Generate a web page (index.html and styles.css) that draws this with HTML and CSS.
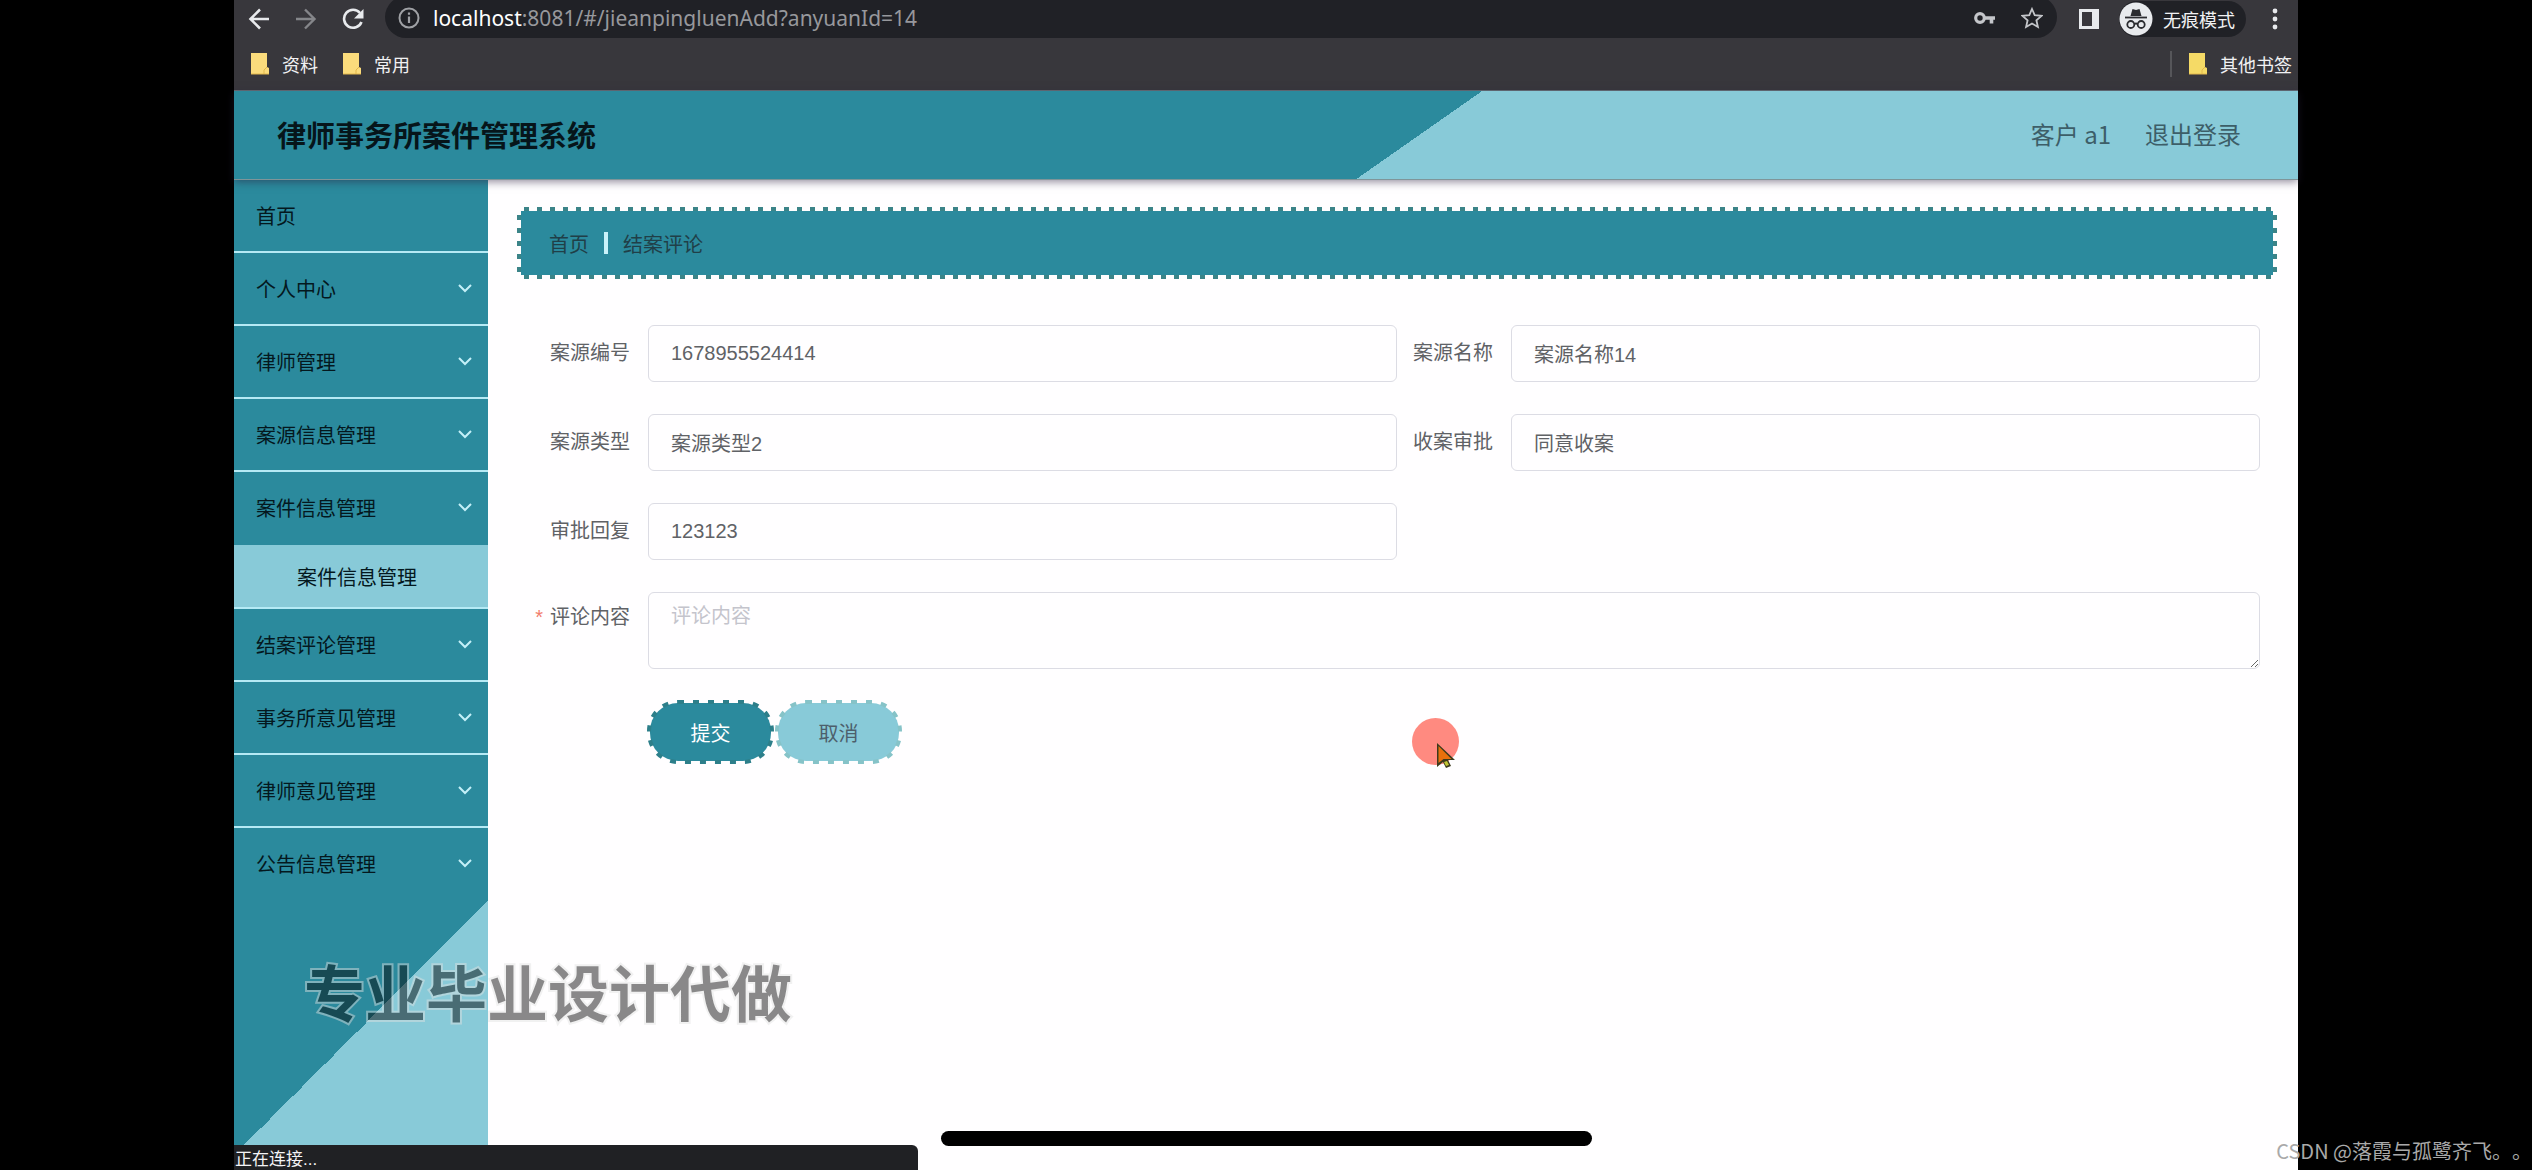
FILE: index.html
```html
<!DOCTYPE html>
<html lang="zh-CN">
<head>
<meta charset="utf-8">
<title>律师事务所案件管理系统</title>
<link rel="stylesheet" href="styles.css">
</head>
<body>
<div class="screen">
  <div class="browser">
    <div class="toolbar">
      <div class="nav-buttons">
        <button class="icon-button" type="button" aria-label="后退"><svg width="22" height="22" viewBox="0 0 22 22"><path d="M21 11H3M12 1.500L2.500 11l9.500 9.500" fill="none" stroke="#e8eaed" stroke-width="2.600"/></svg></button>
        <button class="icon-button" type="button" aria-label="前进"><svg width="22" height="22" viewBox="0 0 22 22"><path d="M1 11h18M10 1.500l9.500 9.500-9.500 9.500" fill="none" stroke="#85868a" stroke-width="2.400"/></svg></button>
        <button class="icon-button" type="button" aria-label="重新加载"><svg width="22" height="22" viewBox="0 0 22 22"><path d="M19.500 14A9 9 0 1 1 18 5" fill="none" stroke="#e8eaed" stroke-width="2.600"/><path d="M21.500 1v9.500h-9.500z" fill="#e8eaed"/></svg></button>
      </div>
      <div class="address">
        <svg width="22" height="22" viewBox="0 0 22 22"><circle cx="11" cy="11" r="9.500" fill="none" stroke="#9fa1a5" stroke-width="2"/><path d="M11 9.500v6.500M11 5.500v2.300" stroke="#9fa1a5" stroke-width="2.200"/></svg>
        <span class="url"><span class="url-host">localhost</span>:8081/#/jieanpingluenAdd?anyuanId=14</span>
        <svg class="key" width="22" height="16" viewBox="0 0 22 16"><circle cx="6" cy="8" r="4.300" fill="none" stroke="#c4c6ca" stroke-width="3.200"/><path d="M10 8h11M17.500 8v5.500" stroke="#c4c6ca" stroke-width="3.600"/></svg>
        <svg width="22" height="22" viewBox="0 0 22 22"><path d="M11 2l2.700 6.200 6.800.6-5.100 4.500 1.500 6.700-5.900-3.500L5.100 20l1.500-6.700L1.500 8.800l6.800-.6z" fill="none" stroke="#c4c6ca" stroke-width="1.800"/></svg>
      </div>
      <svg class="panel" width="20" height="20" viewBox="0 0 20 20"><path d="M0 0h20v20H0zM3 3v14h10V3z" fill="#e8eaed" fill-rule="evenodd"/></svg>
      <div class="incognito">
        <svg width="34" height="34" viewBox="0 0 34 34"><circle cx="17" cy="17" r="16.500" fill="#e8eaed"/><path d="M11.500 14l2-7 3.500 1 3.500-1 2 7z" fill="#2b2c30"/><path d="M6 15.500h22" stroke="#2b2c30" stroke-width="1.800"/><g fill="none" stroke="#2b2c30" stroke-width="1.800"><circle cx="11.800" cy="22.500" r="3.500"/><circle cx="22.200" cy="22.500" r="3.500"/><path d="M15.300 22q1.700-1 3.400 0"/></g></svg>
        <span>无痕模式</span>
      </div>
      <svg width="6" height="22" viewBox="0 0 6 22"><g fill="#e8eaed"><circle cx="3" cy="3" r="2.400"/><circle cx="3" cy="11" r="2.400"/><circle cx="3" cy="19" r="2.400"/></g></svg>
    </div>
    <div class="bookmarks">
      <a class="bookmark" href="#"><svg width="18" height="22" viewBox="0 0 18 22"><path d="M0 0h16v14l2 1v6H0z" fill="#fbdc7c"/><path d="M0 21h18M13 21v-4l3-3" stroke="#e2b84c" fill="none"/></svg>资料</a>
      <a class="bookmark" href="#"><svg width="18" height="22" viewBox="0 0 18 22"><path d="M0 0h16v14l2 1v6H0z" fill="#fbdc7c"/><path d="M0 21h18M13 21v-4l3-3" stroke="#e2b84c" fill="none"/></svg>常用</a>
      <a class="bookmark other" href="#"><svg width="18" height="22" viewBox="0 0 18 22"><path d="M0 0h16v14l2 1v6H0z" fill="#f5da66"/><path d="M0 21h18M13 21v-4l3-3" stroke="#e2b84c" fill="none"/></svg>其他书签</a>
    </div>
  </div>

  <header class="app-header">
    <h1 class="app-title">律师事务所案件管理系统</h1>
    <div class="account">
      <span>客户 a1</span>
      <a href="#">退出登录</a>
    </div>
  </header>

  <div class="app-body">
    <aside class="sidebar">
      <nav>
        <ul class="menu">
          <li><a class="menu-item" href="#">首页</a></li>
          <li><a class="menu-item" href="#">个人中心<svg class="chevron" viewBox="0 0 14 9"><path d="M1 1l6 6 6-6"/></svg></a></li>
          <li><a class="menu-item" href="#">律师管理<svg class="chevron" viewBox="0 0 14 9"><path d="M1 1l6 6 6-6"/></svg></a></li>
          <li><a class="menu-item" href="#">案源信息管理<svg class="chevron" viewBox="0 0 14 9"><path d="M1 1l6 6 6-6"/></svg></a></li>
          <li><a class="menu-item open" href="#">案件信息管理<svg class="chevron" viewBox="0 0 14 9"><path d="M1 1l6 6 6-6"/></svg></a>
            <a class="submenu-item" href="#">案件信息管理</a></li>
          <li><a class="menu-item" href="#">结案评论管理<svg class="chevron" viewBox="0 0 14 9"><path d="M1 1l6 6 6-6"/></svg></a></li>
          <li><a class="menu-item" href="#">事务所意见管理<svg class="chevron" viewBox="0 0 14 9"><path d="M1 1l6 6 6-6"/></svg></a></li>
          <li><a class="menu-item" href="#">律师意见管理<svg class="chevron" viewBox="0 0 14 9"><path d="M1 1l6 6 6-6"/></svg></a></li>
          <li><a class="menu-item last" href="#">公告信息管理<svg class="chevron" viewBox="0 0 14 9"><path d="M1 1l6 6 6-6"/></svg></a></li>
        </ul>
      </nav>
      <div class="sidebar-foot"></div>
    </aside>

    <main class="content">
      <div class="breadcrumb">
        <a href="#">首页</a>
        <span class="separator"></span>
        <span class="current">结案评论</span>
      </div>
      <form class="form">
        <div class="field">
          <label for="no">案源编号</label>
          <input id="no" type="text" value="1678955524414" readonly>
        </div>
        <div class="field">
          <label for="name">案源名称</label>
          <input id="name" type="text" value="案源名称14" readonly>
        </div>
        <div class="field">
          <label for="type">案源类型</label>
          <input id="type" type="text" value="案源类型2" readonly>
        </div>
        <div class="field">
          <label for="approval">收案审批</label>
          <input id="approval" type="text" value="同意收案" readonly>
        </div>
        <div class="field first-column">
          <label for="reply">审批回复</label>
          <input id="reply" type="text" value="123123" readonly>
        </div>
        <div class="field wide">
          <label for="comment"><span class="required">*</span>评论内容</label>
          <textarea id="comment" placeholder="评论内容"></textarea>
        </div>
        <div class="actions wide">
          <button class="pill submit" type="submit"><svg class="pill-shape" aria-hidden="true"><rect class="pill-fill"/><rect class="pill-edge"/></svg><span>提交</span></button>
          <button class="pill cancel" type="button"><svg class="pill-shape" aria-hidden="true"><rect class="pill-fill"/><rect class="pill-edge"/></svg><span>取消</span></button>
        </div>
      </form>
    </main>
  </div>

  <div class="watermark">专业毕业设计代做</div>
  <div class="status">正在连接...</div>
  <svg class="pointer" width="48" height="52" viewBox="0 0 48 52"><circle cx="23.500" cy="23.500" r="23.500" fill="#ff8a80"/><path d="M25 25v24l6-5 3 6 5-2-3-6h7z" fill="#3c3a1c"/><path d="M26.500 28v17l5-4h8z" fill="#e8700c"/><path d="M32 44l2 4 3-1-2-4z" fill="#c3c736"/></svg>
</div>
<div class="home-indicator"></div>
<div class="credit">CSDN @落霞与孤鹭齐飞。。</div>
</body>
</html>
```
FILE: styles.css
```css
:root {
  --teal: #2b8a9d;
  --light: #88cad8;
  --line: #b5eaf5;
}

* {
  box-sizing: border-box;
}

body {
  margin: 0;
  min-height: 100vh;
  padding: 0 234px;
  display: flex;
  background: #000;
  font-family: "Liberation Sans", "Noto Sans CJK SC", sans-serif;
  font-size: 20px;
  position: relative;
}

a {
  color: inherit;
  text-decoration: none;
}

svg {
  display: block;
  flex: none;
}

.screen {
  flex: 1;
  display: flex;
  flex-direction: column;
  position: relative;
  background: #fffeff;
}

/* Browser chrome */

.browser {
  background: #38373c;
  border-bottom: 1px solid #67717a;
  color: #f1f1f3;
  font-size: 18px;
}

.toolbar {
  height: 38px;
  display: flex;
  align-items: center;
  padding-right: 20px;
}

.nav-buttons {
  display: flex;
  gap: 25px;
  padding: 0 21px 0 14px;
}

.icon-button {
  border: 0;
  padding: 0;
  background: none;
}

.address {
  flex: 1;
  height: 42px;
  margin-top: -4px;
  padding: 2px 14px 0 13px;
  display: flex;
  align-items: center;
  border-radius: 21px;
  background: #202126;
}

.url {
  flex: 1;
  padding-left: 13px;
  color: #97989c;
  font-family: "Noto Sans", sans-serif;
  font-size: 21px;
  line-height: 28px;
}

.url-host {
  color: #fff;
}

.key {
  margin-right: 25px;
}

.panel {
  margin: 0 20px 0 22px;
}

.incognito {
  height: 36px;
  margin-right: 26px;
  padding-right: 11px;
  display: flex;
  align-items: center;
  gap: 10px;
  border-radius: 18px;
  background: #202126;
}

.bookmarks {
  height: 52px;
  padding: 0 6px 0 17px;
  display: flex;
  align-items: center;
  gap: 25px;
}

.bookmark {
  display: flex;
  align-items: center;
  gap: 13px;
}

.other {
  margin-left: auto;
  padding-left: 17px;
  border-left: 2px solid #56565a;
}

/* Application header */

.app-header {
  height: 89px;
  padding: 0 57px 0 43px;
  display: flex;
  align-items: center;
  justify-content: space-between;
  background: linear-gradient(145deg, var(--teal) 57%, var(--light) 57%);
  border-bottom: 1px solid #7f9599;
  box-shadow: 0 2px 8px rgba(40, 30, 60, 0.5);
  z-index: 1;
}

.app-title {
  margin: 0;
  padding-top: 4px;
  color: #06151a;
  font-size: 29px;
  font-weight: 700;
  line-height: 40px;
}

.account {
  padding-bottom: 2px;
  display: flex;
  gap: 34px;
  color: #3d5e68;
  font-family: "Noto Sans CJK SC", sans-serif;
  font-size: 24px;
  line-height: 34px;
}

/* Sidebar */

.app-body {
  flex: 1;
  display: flex;
}

.sidebar {
  width: 254px;
  display: flex;
  flex-direction: column;
  background: var(--teal);
  color: #04181e;
}

.menu {
  margin: 0;
  padding: 0;
  list-style: none;
}

.menu-item {
  height: 73px;
  padding: 0 16px 0 22px;
  display: flex;
  align-items: center;
  justify-content: space-between;
  border-bottom: 2px solid var(--line);
}

.menu-item.open,
.menu-item.last {
  border-bottom-color: transparent;
}

.chevron {
  width: 14px;
  height: 9px;
  fill: none;
  stroke: #c4f0f8;
  stroke-width: 2;
}

.submenu-item {
  height: 64px;
  padding-left: 63px;
  display: flex;
  align-items: center;
  background: var(--light);
  border-bottom: 2px solid var(--line);
}

.sidebar-foot {
  flex: 1;
  background: linear-gradient(135deg, var(--teal) 50%, var(--light) 50%) 0 0 / 254px 254px no-repeat;
}

/* Content */

.content {
  flex: 1;
  padding: 27px 21px 0 29px;
}

.breadcrumb {
  --tick: #3b8488;
  height: 72px;
  padding: 0 32px;
  display: flex;
  align-items: center;
  gap: 15px;
  color: #203f48;
  background:
    linear-gradient(var(--teal), var(--teal)) 4px 4px / calc(100% - 8px) calc(100% - 8px) no-repeat,
    linear-gradient(90deg, var(--tick) 5px, transparent 5px) 7px 0 / 13px 4px repeat-x,
    linear-gradient(90deg, var(--tick) 5px, transparent 5px) 7px 100% / 13px 4px repeat-x,
    linear-gradient(var(--tick) 5px, transparent 5px) 0 8px / 4px 13px repeat-y,
    linear-gradient(var(--tick) 5px, transparent 5px) 100% 8px / 4px 13px repeat-y;
}

.separator {
  width: 4px;
  height: 22px;
  background: #c9f2fa;
}

.form {
  padding: 46px 17px 0;
  display: grid;
  grid-template-columns: 1fr 1fr;
  row-gap: 32px;
  color: #606266;
}

.field {
  display: flex;
}

.first-column {
  grid-column: 1;
}

.wide {
  grid-column: 1 / -1;
}

label {
  width: 114px;
  padding-right: 18px;
  flex: none;
  text-align: right;
  line-height: 57px;
}

.wide label {
  line-height: 50px;
}

.required {
  margin-right: 7px;
  color: #f27c6c;
}

input,
textarea {
  flex: 1;
  min-width: 0;
  margin: 0;
  padding: 0 22px;
  border: 1px solid #dcdce4;
  border-radius: 6px;
  outline: 0;
  background: #fffeff;
  color: #606266;
  font: inherit;
}

input {
  height: 57px;
}

textarea {
  height: 77px;
  padding: 8px 22px;
  line-height: 30px;
}

::placeholder {
  color: #c4c4cc;
}

.actions {
  margin-top: -1px;
  padding-left: 113px;
  display: flex;
  gap: 1px;
}

.pill {
  width: 127px;
  height: 64px;
  padding: 0;
  border: 0;
  background: none;
  position: relative;
  font: inherit;
}

.pill span {
  position: relative;
}

.pill-shape {
  width: 100%;
  height: 100%;
  position: absolute;
  inset: 0;
}

.pill-fill {
  x: 3px;
  y: 3px;
  width: calc(100% - 6px);
  height: calc(100% - 6px);
  rx: 28px;
}

.pill-edge {
  x: 2px;
  y: 2px;
  width: calc(100% - 4px);
  height: calc(100% - 4px);
  rx: 29px;
  fill: none;
  stroke-width: 4px;
  stroke-dasharray: 6px 9px;
}

.submit {
  color: #fff;
}

.submit .pill-fill {
  fill: var(--teal);
}

.submit .pill-edge {
  stroke: #2d7f8a;
}

.cancel {
  color: #4d5f6c;
}

.cancel .pill-fill {
  fill: var(--light);
}

.cancel .pill-edge {
  stroke: #86c3c8;
}

/* Overlays */

.watermark {
  position: absolute;
  left: 70px;
  bottom: 138px;
  z-index: 2;
  color: #000;
  font-size: 61px;
  font-weight: 700;
  line-height: 72px;
  opacity: 0.46;
  paint-order: stroke fill;
  -webkit-text-stroke: 4px #e2e2e2;
}

.status {
  position: absolute;
  left: 0;
  bottom: 0;
  z-index: 2;
  width: 684px;
  height: 25px;
  padding: 5px 0 0 1px;
  border-top-right-radius: 6px;
  background: #202124;
  color: #f4f4f6;
  font-size: 17px;
  line-height: 20px;
}

.pointer {
  position: absolute;
  left: 1178px;
  top: 718px;
}

.home-indicator {
  position: absolute;
  left: 50%;
  bottom: 24px;
  z-index: 3;
  width: 651px;
  height: 15px;
  margin-left: -325px;
  border-radius: 8px;
  background: #000;
}

.credit {
  position: absolute;
  right: 0;
  bottom: 4px;
  z-index: 3;
  color: #a9a9a9;
  font-family: "Noto Sans CJK SC", sans-serif;
  line-height: 30px;
  text-spacing-trim: space-all;
}
```
